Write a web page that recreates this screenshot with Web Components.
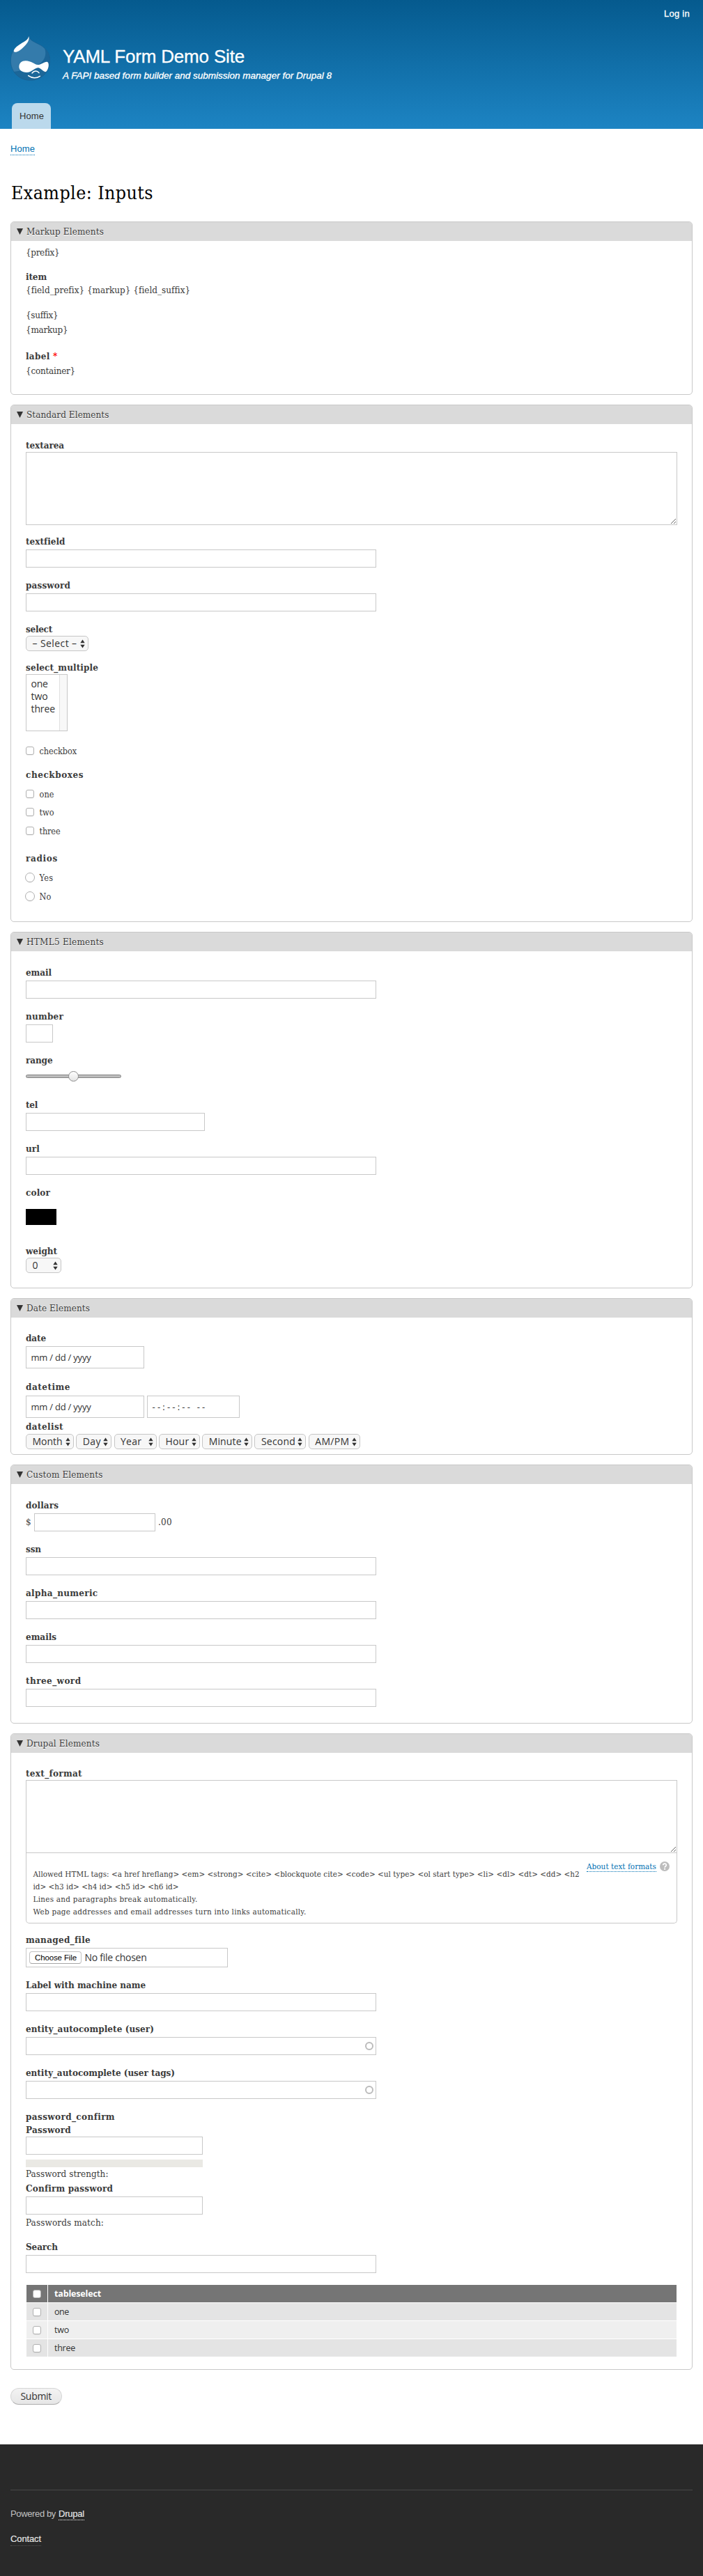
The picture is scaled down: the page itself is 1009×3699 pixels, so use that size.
<!DOCTYPE html>
<html lang="en">
<head>
<meta charset="utf-8">
<title>Example: Inputs | YAML Form Demo Site</title>
<style>
html, body { margin: 0; padding: 0; background: #fff; }
body { font: 13.4px "DejaVu Serif Condensed", "DejaVu Serif", "Liberation Serif", serif; color: #3b3b3b; }
</style>
</head>
<body>
<demo-page></demo-page>
<script>
const define = (name, html, setup) => {
  const tpl = document.createElement('template');
  tpl.innerHTML = html.trim();
  customElements.define(name, class extends HTMLElement {
    connectedCallback() {
      if (this.shadowRoot) return;
      this.attachShadow({ mode: 'open' }).append(tpl.content.cloneNode(true));
      if (setup) setup(this, this.shadowRoot);
    }
  });
};
const px = (el, attr, dflt) => (el.getAttribute(attr) ?? dflt) + 'px';

/* Text run tracked to a given width: <fit-text w="120"> */
define('fit-text', `<style>:host{display:inline-block;white-space:pre;vertical-align:baseline} span{display:inline-block}</style><span><slot></slot></span>`, (el, root) => {
  const w = +el.getAttribute('w');
  const s = root.querySelector('span');
  const n = [...el.textContent].length;
  el.style.width = w + 'px';
  s.style.letterSpacing = ((w - s.getBoundingClientRect().width) / n) + 'px';
});

define('text-line', `
<style>:host{display:block;height:20px;line-height:20px;white-space:nowrap} :host([bold]){font-weight:bold}</style><slot></slot>`,
(el) => { el.style.marginTop = px(el, 'mt', 0); });

/* Labelled form item */
define('form-item', `
<style>
:host{display:flex;flex-direction:column;align-items:flex-start}
label{display:block;height:20px;line-height:20px;font-weight:bold;white-space:nowrap}
.c{display:flex;align-items:flex-start;align-self:stretch}
</style><label></label><div class="c"><slot></slot></div>`, (el, root) => {
  el.style.marginTop = px(el, 'mt', 15);
  const f = document.createElement('fit-text');
  f.textContent = el.getAttribute('label');
  f.setAttribute('w', el.getAttribute('lw'));
  root.querySelector('label').append(f);
  root.querySelector('.c').style.marginTop = px(el, 'gap', 2);
});

define('text-box', `
<style>
:host{display:block;position:relative}
input{display:block;box-sizing:border-box;width:100%;height:100%;border:1px solid #c8c8c8;border-radius:0;background:#fff;margin:0;padding:0;appearance:none;outline:0}
i{display:none;position:absolute;right:4px;top:7px;width:8px;height:8px;border:2px solid #bbb;border-radius:50%}
:host([throbber]) i{display:block}
</style><input type="text"><i></i>`, (el, root) => {
  el.style.width = px(el, 'w', 503);
  el.style.height = px(el, 'h', 26);
});

define('area-box', `
<style>
:host{display:block;flex:1;height:105px}
textarea{display:block;box-sizing:border-box;width:100%;height:105px;border:1px solid #c8c8c8;border-radius:0;background:#fff;margin:0;outline:0;resize:vertical}
</style><textarea></textarea>`);

define('value-box', `
<style>
:host{display:block;box-sizing:border-box;height:32px;border:1px solid #c8c8c8;background:#fff;padding-left:6.5px;font:13px/30px "Open Sans",sans-serif;color:#333}
</style><slot></slot>`, (el) => { el.style.width = px(el, 'w', 170); });

define('select-box', `
<style>
:host{display:flex;box-sizing:border-box;height:22px;border:1px solid #c6c6c6;border-radius:5px;background:#f7f7f7;padding:0 4px 0 8.5px;justify-content:space-between;align-items:center;font:14px/20px "Open Sans",sans-serif;color:#333}
svg{flex:none}
</style><slot></slot><svg width="7" height="13" viewBox="0 0 7 13"><path d="M3.5 .5 6.7 5.3H.3zM3.5 12.5.3 7.7h6.4z" fill="#333"/></svg>`,
(el) => { el.style.width = px(el, 'w', 60); });

define('list-box', `
<style>
:host{display:flex;box-sizing:border-box;width:60px;height:82px;border:1px solid #c8c8c8;background:#fff;font:14px/18px "Open Sans",sans-serif;color:#333}
.o{flex:1;padding:4px 0 0 6.5px}
.s{width:10px;border-left:1px solid #e0e0e0;background:#f8f8f8}
::slotted(fit-text){display:block}
</style><div class="o"><slot></slot></div><div class="s"></div>`);

define('check-mark', `
<style>
:host{display:block;flex:none;box-sizing:border-box;width:12px;height:12px;border:1px solid #b0b0b0;border-radius:3px;background:#fff;box-shadow:0 1px 0 rgba(0,0,0,.05)}
:host([round]){width:14px;height:14px;border-radius:50%}
</style>`);

define('option-row', `
<style>
:host{display:flex;align-items:center;height:20px;line-height:19px;font-size:12.6px}
check-mark{margin-right:7.5px}
check-mark[round]{margin:0 6.5px 0 -1px}
</style><check-mark></check-mark><slot></slot>`, (el, root) => {
  el.style.marginTop = px(el, 'mt', 7);
  if (el.hasAttribute('round')) root.querySelector('check-mark').setAttribute('round', '');
});

define('range-slider', `
<style>
:host{display:block;width:137px;height:17px}
svg{display:block}
</style>
<svg width="137" height="17" viewBox="0 0 137 17">
<defs><linearGradient id="k" x1="0" y1="0" x2="0" y2="1"><stop offset="0" stop-color="#fff"/><stop offset="1" stop-color="#e4e4e4"/></linearGradient></defs>
<rect x=".5" y="6.5" width="136" height="4" rx="2" fill="#bdbdbd" stroke="#858585"/>
<circle cx="68.5" cy="8.5" r="7" fill="url(#k)" stroke="#8c8c8c"/></svg>`);

define('form-section', `
<style>
:host{display:flex;flex:none;flex-direction:column;box-sizing:border-box;border:1px solid #c8c8c8;border-radius:5px;margin-bottom:14px;overflow:hidden;background:#fff}
header{display:flex;align-items:center;height:27px;flex:none;background:#dadada;padding-left:7px;line-height:25px;text-shadow:0 1px 0 #fff;color:#3b3b3b}
header fit-text{margin-top:-1px}
svg{margin:0 5px 0 1px}
.b{padding:0 21px;display:flex;flex-direction:column}
</style>
<header><svg width="9" height="9" viewBox="0 0 9 9"><path d="M0 0h9L4.5 9z" fill="#333"/></svg></header>
<div class="b"><slot></slot></div>`, (el, root) => {
  el.style.height = px(el, 'h', 200);
  const f = document.createElement('fit-text');
  f.textContent = el.getAttribute('heading');
  f.setAttribute('w', el.getAttribute('hw'));
  root.querySelector('header').append(f);
});

define('drupal-logo', `
<style>:host{display:block;width:57px;height:65px} svg{display:block}</style>
<svg width="57" height="65" viewBox="45 64 171 195">
<defs><clipPath id="d"><path d="M124 66C127 86 150 92 175 106C200 121 215 142 215 170C215 221 178 257 131 257C83 257 46 221 46 172C46 134 68 112 92 99C112 88 121 80 124 66Z"/></clipPath></defs>
<g clip-path="url(#d)"><rect x="45" y="64" width="171" height="195" fill="#347bab"/>
<path d="M183 105C204 128 199 168 170 186C140 204 100 216 45 221V260H216V105Z" fill="#1b6598"/>
<path d="M45 219C75 226 120 224 160 210L216 190V260H45Z" fill="#1c6799"/></g>
<path d="M124 66C127 86 150 92 175 106C200 121 215 142 215 170C215 221 178 257 131 257C83 257 46 221 46 172C46 134 68 112 92 99C112 88 121 80 124 66Z" fill="none" stroke="#1a5f90" stroke-width="2"/>
<path d="M124 67C120 83 109 88 90 99C70 111 60 122 59 131C61 138 72 136 82 130C96 121 109 108 118 95C123 87 126 78 124 67Z" fill="#fff"/>
<path d="M110 173C136 173 148 190 162 190C177 190 190 176 203 177C213 180 211 207 199 219C191 225 183 210 166 203C151 202 137 223 115 223C93 223 82 212 82 199C82 182 94 173 110 173Z" fill="#fff"/>
<path d="M138 226C147 214 160 214 168 225M122 237C138 249 158 249 172 239" fill="none" stroke="#fff" stroke-width="4.5" stroke-linecap="round"/>
</svg>`);

define('site-header', `
<style>
:host{display:flex;flex-direction:column;height:185px;background:linear-gradient(#055a8e,#1d84c3);font-family:"Liberation Sans",sans-serif;color:#fff}
.login{height:41px;padding:6px 19px 0 0;box-sizing:border-box;display:flex;justify-content:flex-end;font-size:13px;line-height:28px}
.brand{display:flex;padding:10px 0 0 15px;height:97px}
.names{margin:15px 0 0 18px}
.name{font-size:26px;line-height:30px;height:33px}
.slogan{font-size:13.5px;line-height:20px;font-style:italic;-webkit-text-stroke:.3px}
.tab{margin-left:17px;width:56px;height:37px;box-sizing:border-box;padding-left:11px;background:#bbd9ec;border-radius:8px 8px 0 0;color:#333;font-size:13px;line-height:38px}
.name,.login{-webkit-text-stroke:.3px}
</style>
<div class="login"><fit-text w="37">Log in</fit-text></div>
<div class="brand"><drupal-logo></drupal-logo><div class="names">
<div class="name"><fit-text w="261">YAML Form Demo Site</fit-text></div>
<div class="slogan"><fit-text w="386">A FAPI based form builder and submission manager for Drupal 8</fit-text></div></div></div>
<div class="tab"><fit-text w="35">Home</fit-text></div>`);

define('format-help', `
<style>
:host{display:flex;box-sizing:border-box;height:101px;border:1px solid #c8c8c8;border-top:0;border-radius:0 0 5px 5px;padding:21px 10px 0 9.5px;font-size:11.6px;line-height:18px;justify-content:space-between}
.t{display:flex;flex-direction:column}
.a{display:flex;margin-top:-10px;height:16px;gap:5px}
.l{color:#0071b3;border-bottom:1px dotted #0071b3;height:15px;line-height:16px}
svg{margin-top:1px}
</style>
<div class="t">
<fit-text w="784">Allowed HTML tags: &lt;a href hreflang&gt; &lt;em&gt; &lt;strong&gt; &lt;cite&gt; &lt;blockquote cite&gt; &lt;code&gt; &lt;ul type&gt; &lt;ol start type&gt; &lt;li&gt; &lt;dl&gt; &lt;dt&gt; &lt;dd&gt; &lt;h2</fit-text>
<fit-text w="209">id&gt; &lt;h3 id&gt; &lt;h4 id&gt; &lt;h5 id&gt; &lt;h6 id&gt;</fit-text>
<fit-text w="236">Lines and paragraphs break automatically.</fit-text>
<fit-text w="392">Web page addresses and email addresses turn into links automatically.</fit-text></div>
<div class="a"><div class="l"><fit-text w="100">About text formats</fit-text></div>
<svg width="14" height="14" viewBox="0 0 14 14"><circle cx="7" cy="7" r="7" fill="#bdbdbd"/><path d="M4.7 5.3C4.8 2.4 9.4 2.5 9.3 5.2C9.2 6.8 7.1 6.9 7.1 8.7" fill="none" stroke="#fff" stroke-width="1.8"/><rect x="6.1" y="9.8" width="2" height="1.9" fill="#fff"/></svg></div>`);

define('file-box', `
<style>
:host{display:flex;box-sizing:border-box;width:290px;height:28px;border:1px solid #c8c8c8;align-items:center;padding-left:4px;font:14px/26px "Open Sans",sans-serif;color:#333}
b{display:block;box-sizing:border-box;width:75px;height:18px;border:1px solid #c2c2c2;border-bottom-color:#a5a5a5;border-radius:4px;background:#fff;font:11.5px/17px "Liberation Sans",sans-serif;color:#000;padding-left:7px;margin-right:4.5px}
</style><b><fit-text w="60">Choose File</fit-text></b><fit-text w="89">No file chosen</fit-text>`);

define('table-row', `
<style>
:host{display:grid;grid-template-columns:30px 1fr;column-gap:1px;height:25px;margin-bottom:1px;font:12.5px/25px "Open Sans",sans-serif;color:#333}
div{background:var(--row,#e4e4e4);display:flex;align-items:center}
.c{padding-left:9px}.n{padding-left:9px}
:host([head]){--row:#757575;color:#fff;font-weight:bold}
:host([even]){--row:#efefef}
</style><div class="c"><check-mark></check-mark></div><div class="n"><slot></slot></div>`);

define('site-footer', `
<style>
:host{display:block;box-sizing:border-box;height:189px;background:#292929;padding:65px 15px 0;font:13px/20px "Liberation Sans",sans-serif;color:#c0c0c0}
.r{border-top:1px solid #484848;padding-top:24px;display:flex;flex-direction:column;align-items:flex-start}
.p{display:flex;gap:4px;height:36px}
a{display:block;height:18px;border-bottom:1px dotted #fff;color:#e8e8e8;-webkit-text-stroke:.15px}
.k{border-color:#555;height:19px}
</style><div class="r"><div class="p"><fit-text w="65">Powered by</fit-text><a><fit-text w="37">Drupal</fit-text></a></div>
<a class="k"><fit-text w="44">Contact</fit-text></a></div>`);

define('demo-page', `
<style>
:host{display:block;width:1009px;height:3699px;overflow:hidden}
main{display:flex;flex-direction:column;padding:0 15px;height:3325px;box-sizing:border-box}
nav{height:73px;flex:none;padding-top:19px;box-sizing:border-box;font:13px/20px "Liberation Sans",sans-serif;color:#0071b3;display:flex;align-items:flex-start}
nav span{display:block;height:18px;border-bottom:1px dotted #0071b3}
h1{margin:0;height:60px;flex:none;font-size:26.5px;line-height:37px;font-weight:normal;color:#000;padding-left:1px}
.red{color:#f00}
.list{display:flex;gap:var(--g,4px)}
.bar{height:11px;width:254px;margin-top:7px;background:#eae9e4;flex:none}
.table{margin:17px 1px 0}
button{width:74px;height:24px;flex:none;margin:12px 0 0;border:1px solid #d6d6d6;border-bottom-color:#acacac;border-radius:12px;background:linear-gradient(#f3f3f3,#e6e6e6);font:14px/20px "Open Sans",sans-serif;color:#333;padding:0 0 0 13.5px;text-align:left}
</style>
<site-header></site-header>
<main>
<nav><span><fit-text w="35">Home</fit-text></span></nav>
<h1><fit-text w="204">Example: Inputs</fit-text></h1>

<form-section heading="Markup Elements" hw="111" h="249">
<text-line mt="7"><fit-text w="48">{prefix}</fit-text></text-line>
<text-line mt="14" bold><fit-text w="30">item</fit-text></text-line>
<text-line><fit-text w="235">{field_prefix} {markup} {field_suffix}</fit-text></text-line>
<text-line mt="16"><fit-text w="46">{suffix}</fit-text></text-line>
<text-line mt="1"><fit-text w="60.5">{markup}</fit-text></text-line>
<text-line mt="17" bold><fit-text w="39">label </fit-text><span class="red">*</span></text-line>
<text-line mt="2"><fit-text w="71">{container}</fit-text></text-line>
</form-section>

<form-section heading="Standard Elements" hw="118.5" h="743">
<form-item label="textarea" lw="55" mt="20" gap="0"><area-box></area-box></form-item>
<form-item label="textfield" lw="55.5" mt="13"><text-box></text-box></form-item>
<form-item label="password" lw="64"><text-box></text-box></form-item>
<form-item label="select" lw="38" gap="0"><select-box w="90"><fit-text w="64">– Select –</fit-text></select-box></form-item>
<form-item label="select_multiple" lw="104" mt="13" gap="0"><list-box><fit-text w="24">one</fit-text><fit-text w="24">two</fit-text><fit-text w="34.5">three</fit-text></list-box></form-item>
<option-row mt="18"><fit-text w="53.5">checkbox</fit-text></option-row>
<text-line mt="14" bold><fit-text w="83">checkboxes</fit-text></text-line>
<option-row mt="8"><fit-text w="21">one</fit-text></option-row>
<option-row mt="6"><fit-text w="21">two</fit-text></option-row>
<option-row mt="7"><fit-text w="30">three</fit-text></option-row>
<text-line mt="19" bold><fit-text w="46">radios</fit-text></text-line>
<option-row mt="8" round><fit-text w="20">Yes</fit-text></option-row>
<option-row mt="7" round><fit-text w="17">No</fit-text></option-row>
</form-section>

<form-section heading="HTML5 Elements" hw="111" h="512">
<form-item label="email" lw="37" mt="20"><text-box></text-box></form-item>
<form-item label="number" lw="54"><text-box w="39"></text-box></form-item>
<form-item label="range" lw="38.5" gap="5"><range-slider></range-slider></form-item>
<form-item label="tel" lw="17" mt="22"><text-box w="257"></text-box></form-item>
<form-item label="url" lw="20"><text-box></text-box></form-item>
<form-item label="color" lw="35" gap="14"><div style="width:44px;height:23px;background:#000"></div></form-item>
<form-item label="weight" lw="45" mt="27" gap="0"><select-box w="51"><fit-text w="8">0</fit-text></select-box></form-item>
</form-section>

<form-section heading="Date Elements" hw="91" h="225">
<form-item label="date" lw="29" mt="19"><value-box><fit-text w="86">mm / dd / yyyy</fit-text></value-box></form-item>
<form-item label="datetime" lw="64" mt="16" gap="3"><div class="list"><value-box><fit-text w="86">mm / dd / yyyy</fit-text></value-box><value-box w="133"><fit-text w="79">--:--:-- --</fit-text></value-box></div></form-item>
<form-item label="datelist" lw="54" mt="2" gap="1"><div class="list" style="--g:3.3px">
<select-box w="69"><fit-text w="43">Month</fit-text></select-box><select-box w="51"><fit-text w="26">Day</fit-text></select-box><select-box w="61"><fit-text w="30">Year</fit-text></select-box><select-box w="59"><fit-text w="34">Hour</fit-text></select-box><select-box w="72"><fit-text w="47">Minute</fit-text></select-box><select-box w="74"><fit-text w="49">Second</fit-text></select-box><select-box w="74"><fit-text w="49">AM/PM</fit-text></select-box></div></form-item>
</form-section>

<form-section heading="Custom Elements" hw="109.5" h="372">
<form-item label="dollars" lw="47" mt="20"><div class="list" style="line-height:26px"><fit-text w="8">$</fit-text><text-box w="174"></text-box><fit-text w="20">.00</fit-text></div></form-item>
<form-item label="ssn" lw="22"><text-box></text-box></form-item>
<form-item label="alpha_numeric" lw="103.5"><text-box></text-box></form-item>
<form-item label="emails" lw="44"><text-box></text-box></form-item>
<form-item label="three_word" lw="79.5"><text-box></text-box></form-item>
</form-section>

<form-section heading="Drupal Elements" hw="105" h="914">
<form-item label="text_format" lw="81" mt="19" gap="0"><area-box></area-box></form-item>
<format-help></format-help>
<form-item label="managed_file" lw="92" mt="13"><file-box></file-box></form-item>
<form-item label="Label with machine name" lw="172"><text-box></text-box></form-item>
<form-item label="entity_autocomplete (user)" lw="184"><text-box throbber></text-box></form-item>
<form-item label="entity_autocomplete (user tags)" lw="214"><text-box throbber></text-box></form-item>
<text-line mt="15" bold><fit-text w="127">password_confirm</fit-text></text-line>
<form-item label="Password" lw="65" mt="-1" gap="0"><text-box w="254"></text-box></form-item>
<div class="bar"></div>
<text-line><fit-text w="118.5">Password strength:</fit-text></text-line>
<form-item label="Confirm password" lw="124" mt="0"><text-box w="254"></text-box></form-item>
<text-line mt="2"><fit-text w="112">Passwords match:</fit-text></text-line>
<form-item label="Search" lw="46" mt="14"><text-box></text-box></form-item>
<div class="table">
<table-row head><fit-text w="67">tableselect</fit-text></table-row>
<table-row><fit-text w="21">one</fit-text></table-row>
<table-row even><fit-text w="21">two</fit-text></table-row>
<table-row><fit-text w="30">three</fit-text></table-row>
</div>
</form-section>
<button type="button"><fit-text w="44.5">Submit</fit-text></button>
</main>
<site-footer></site-footer>`);
</script>
</body>
</html>
